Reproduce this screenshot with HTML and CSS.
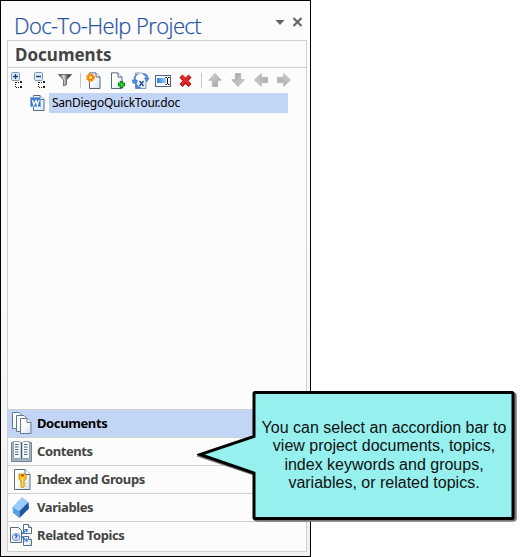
FILE: index.html
```html
<!DOCTYPE html>
<html lang="en">
<head>
<meta charset="utf-8">
<title>Doc-To-Help Project</title>
<link rel="stylesheet" href="styles.css">
</head>
<body>
<svg class="defs" width="0" height="0" aria-hidden="true">
  <defs>
    <linearGradient id="page" x2="1" y2="1"><stop offset=".4" stop-color="#fff"/><stop offset="1" stop-color="#d3e2f0"/></linearGradient>
    <linearGradient id="grey" x2="1" y2="1"><stop stop-color="#d2d2d2"/><stop offset="1" stop-color="#a5a5a5"/></linearGradient>
    <linearGradient id="blue" x2="1"><stop stop-color="#2f7de0"/><stop offset="1" stop-color="#9fd0ff"/></linearGradient>
    <linearGradient id="funnel" x2="1"><stop stop-color="#333"/><stop offset=".4" stop-color="#ddd"/><stop offset=".7" stop-color="#555"/><stop offset="1" stop-color="#222"/></linearGradient>
    <path id="arrow" d="M6.500.5l6 6.500h-3.500v6h-5v-6h-3.500z" fill="url(#grey)" stroke="#b0b0b0" stroke-width=".8"/>
  </defs>
</svg>
<main class="window">
  <header class="titlebar">
    <h1 class="title">Doc-To-Help Project</h1>
    <svg class="controls" width="30" height="14" viewBox="0 0 30 14"><path d="M.5 4h9L5 9z" fill="#666"/><path d="M18.500 2l8 8m0-8l-8 8" stroke="#666" stroke-width="2.200"/></svg>
  </header>
  <section class="panel">
    <h2 class="heading">Documents</h2>
    <div class="toolbar">
      <svg class="tool" width="14" height="18" viewBox="0 0 14 18"><rect x=".5" y=".5" width="8" height="8" rx="1" fill="#dceafa" stroke="#7f98b4"/><path d="M2 4.500h5M4.500 2v5" stroke="#173d78" stroke-width="1.300"/><path d="M4.500 10v6M5 10.500h4M5 15.500h4" stroke="#222" stroke-dasharray="1 1"/><path d="M9 9h2v2H9zM9 14h2v2H9z" fill="#222"/></svg>
      <svg class="tool" width="14" height="18" viewBox="0 0 14 18"><rect x=".5" y=".5" width="8" height="8" rx="1" fill="#dceafa" stroke="#7f98b4"/><path d="M2 4.500h5" stroke="#173d78" stroke-width="1.300"/><path d="M4.500 10v6M5 10.500h4M5 15.500h4" stroke="#222" stroke-dasharray="1 1"/><path d="M9 9h2v2H9zM9 14h2v2H9z" fill="#222"/></svg>
      <svg class="tool" width="15" height="18" viewBox="0 0 15 18"><path d="M.5 2.500h13l-5 5.500v4.500l-3 1.500V8z" fill="url(#funnel)" stroke="#555" stroke-width=".8"/></svg>
      <i class="divider"></i>
      <svg class="tool" width="16" height="18" viewBox="0 0 16 18"><path d="M3.500.9h6.500l4 4v11.600H3.500z" fill="url(#page)" stroke="#526a82"/><path d="M10 1v4h4" fill="#fff" stroke="#526a82"/><circle cx="4.500" cy="5.500" r="3.300" fill="#ffe62e" stroke="#f58a22" stroke-width="2.200" stroke-dasharray="2 .6"/><circle cx="4.500" cy="5.500" r="2.300" fill="#ffe62e" stroke="#ee5522"/></svg>
      <svg class="tool" width="16" height="18" viewBox="0 0 16 18"><path d="M1.500.9H8l4 4v11.600H1.500z" fill="url(#page)" stroke="#526a82"/><path d="M8 1v4h4" fill="#fff" stroke="#526a82"/><path d="M11.500 9v7M8 12.500h7" stroke="#087c13" stroke-width="3.500"/><path d="M11.500 10v5M9 12.500h5" stroke="#24df36" stroke-width="1.500"/></svg>
      <svg class="tool" width="18" height="18" viewBox="0 0 18 18"><path d="M3.500 1H10l4 4v11.500H3.500z" fill="url(#page)" stroke="#8a9cb0"/><path d="M7.500 9l4 5m0-5l-4 5" stroke="#234d94" stroke-width="1.400"/><path d="M6 2C3 3 2 6 2.500 8M11 2c3 0 4.500 2 4.500 5M4 14.500c2 1.500 4 1.500 5 1" fill="none" stroke="#5b93d8" stroke-width="1.800"/><path d="M0 8h5.500l-1 4-3.500-1zM12.500 6h4.500l-2 4zM4 12l3.500 3-3.500 1.500z" fill="#4d8ddd" stroke="#3a6fb8" stroke-width=".5"/></svg>
      <svg class="tool" width="17" height="18" viewBox="0 0 17 18"><rect x=".5" y="3.500" width="15" height="11" fill="#fff" stroke="#4b6887"/><path d="M2 6h9v5H2z" fill="url(#blue)"/><path d="M10.500 5.500h1.500M13 5.500h1.500M10.500 12.500h1.500M13 12.500h1.500M12.500 6v6" stroke="#111"/></svg>
      <svg class="tool" width="14" height="18" viewBox="0 0 14 18"><path d="M2 4l9 9.500M11 4l-9 9.500" stroke="#ac0909" stroke-width="4.200"/><path d="M2.500 4l8 8.500M10.500 4l-8 8.500" stroke="#e52b2b" stroke-width="2.600"/></svg>
      <i class="divider"></i>
      <svg class="arrow" width="14" height="14" viewBox="0 0 13 13.500"><use href="#arrow"/></svg>
      <svg class="arrow" width="14" height="14" viewBox="0 0 13 13.500"><use href="#arrow" transform="rotate(180 6.500 6.750)"/></svg>
      <svg class="arrow" width="14" height="14" viewBox="0 0 13.500 13"><use href="#arrow" transform="translate(0 13) rotate(-90)"/></svg>
      <svg class="arrow" width="14" height="14" viewBox="0 0 13.500 13"><use href="#arrow" transform="translate(13.500 0) rotate(90)"/></svg>
    </div>
    <div class="file">
      <svg width="16" height="16" viewBox="0 0 16 16"><path d="M3.500.5H10l4 4v11H3.500z" fill="url(#page)" stroke="#526a82"/><path d="M10 .5v4h4" fill="#fff" stroke="#526a82"/><rect x=".5" y="2.500" width="10" height="9" fill="#3d79cb" stroke="#83aee5"/><path d="M2.500 5l1.300 5L6 5.500 7.300 10 9 5" fill="none" stroke="#fff" stroke-width="1.300"/></svg>
      <span class="filename">SanDiegoQuickTour.doc</span>
    </div>
    <nav class="accordion">
      <div class="bar active">
        <svg width="26" height="26" viewBox="0 0 26 26"><g fill="url(#page)" stroke="#62798f"><path d="M2.500 1.500H9l3 3v13H2.500z"/><path d="M6.500 4.500H14l3 3v13H6.500z"/><path d="M10.500 7.500H17l4 4v11H10.500z"/><path d="M17 7.500v4h4" fill="#fff"/></g></svg>
        <span class="label">Documents</span></div>
      <div class="bar">
        <svg width="26" height="26" viewBox="0 0 26 26"><path d="M1.500 3.500h20v19h-20z" fill="#a3b2be" stroke="#718698"/><path d="M3.500 2.500h6l2 1.500 2-1.500h6v17h-6l-2 1.500-2-1.500h-6z" fill="#f5f9fc" stroke="#8fa1b0"/><path d="M11.500 4v16" stroke="#415969" stroke-width="1.500"/><path d="M5 5.500h4M5 8h4M5 10.500h4M5 13h4M5 15.500h4M14 5.500h4M14 8h4M14 10.500h4M14 13h4M14 15.500h4" stroke="#4c6684" stroke-dasharray="3 .5"/></svg>
        <span class="label">Contents</span></div>
      <div class="bar">
        <svg width="26" height="26" viewBox="0 0 26 26"><path d="M4.500 2.500H15l5 5v15H4.500z" fill="url(#page)" stroke="#587086"/><path d="M15 2.500v5h5" fill="#fff" stroke="#587086"/><path d="M9 7h6l1 1v4l-2 2v1.500l1 1-1 1 1 1-1 1-1.500 1.500-1.500-1.500V14l-2-2z" fill="#ffc51c" stroke="#d98a00"/><path d="M11 8.500h3" stroke="#855000" stroke-width="1.500"/><path d="M12.500 11v8" stroke="#fff09a"/></svg>
        <span class="label">Index and Groups</span></div>
      <div class="bar">
        <svg width="26" height="26" viewBox="0 0 26 26"><path d="M2.500 12L12 2l6.500 5-9 9z" fill="#9bcaff"/><path d="M2.500 12l7 4v7l-6.500-5z" fill="#5b9fe2"/><path d="M9.500 16l9-9 .5 6.500L9.500 23z" fill="#1b55a4"/></svg>
        <span class="label">Variables</span></div>
      <div class="bar last">
        <svg width="26" height="26" viewBox="0 0 26 26"><g fill="url(#page)" stroke="#587086"><path d="M.5 4.500h8l3 3v12H.5z"/><path d="M13.500 1.500h5l3 3v6h-8zM13.500 13.500h5l3 3v6h-8z"/><path d="M18.500 1.500v3h3M18.500 13.500v3h3" fill="#fff"/></g><ellipse cx="6" cy="14" rx="3.800" ry="3.500" fill="#e4edff" stroke="#6487ca"/><path d="M4.700 13q1.300-1.800 2.500-.5 0 1-1.200 1.500v1.800" fill="none" stroke="#204bb8" stroke-width="1.100"/><path d="M12 11l3-3M12 13.500l3 3" stroke="#2870cf" stroke-width="1.500"/><path d="M14 6h4l-1 4zM17 14.500l1 4h-4z" fill="#3b7cdd"/></svg>
        <span class="label">Related Topics</span></div>
    </nav>
  </section>
</main>
<aside class="callout">
  <svg class="bubble" width="322" height="136" viewBox="0 0 322 136"><path d="M59 4h256q2 0 2 2v122q0 2-2 2H59q-2 0-2-2V84L3 66l54-18V6q0-2 2-2z" fill="none" stroke="#777" stroke-width="3.500" transform="translate(1 1)"/><path d="M58 3.500h257q1 0 1 1v124q0 1-1 1H58q-1 0-1-1V84L3 65.500 57 47.500V4.500q0-1 1-1z" fill="#96f0ed" stroke="#000" stroke-width="3"/></svg>
  <p class="message">You can select an accordion bar to<br>view project documents, topics,<br>index keywords and groups,<br>variables, or related topics.</p>
</aside>
</body>
</html>
```

FILE: styles.css
```css
* { box-sizing: border-box; }
body { margin: 0; background: #fff; width: 525px; height: 557px; overflow: hidden; position: relative; }
.defs { position: absolute; }
svg { display: block; flex: none; }
.window { width: 311px; height: 557px; border: 1px solid #000; padding: 0 3px 4px 6px; display: flex; flex-direction: column; background: linear-gradient(#fcfcfc 0 40%, #f0f0f0); }
.titlebar { height: 39px; display: flex; justify-content: space-between; padding: 7px 2px 0 7px; }
.title { margin: 0; font: 300 22px/34px "Open Sans", sans-serif; color: #2855a0; letter-spacing: -.6px; white-space: nowrap; -webkit-text-stroke: .25px #2855a0; }
.controls { margin-top: 8px; }
.panel { flex: 1; display: flex; flex-direction: column; border: 1px solid #d0d0d0; background: #fcfcfc; min-height: 0; }
.heading { margin: 0; height: 27px; border-bottom: 1px solid #d0d0d0; padding-left: 7px; font: bold 17px/28px "Noto Sans", sans-serif; color: #444; }
.toolbar { height: 25px; display: grid; grid-template-columns: 23px 24px 22px 6px 24px 22px 23px 24px 22px 7px 23px 23px 23px 22px; align-items: center; padding-left: 3px; }
.arrow { margin-top: -2px; }
.divider { width: 1px; height: 15px; background: #c6c6c6; }
.file { display: flex; align-items: center; height: 20px; padding-left: 22px; gap: 3px; }
.filename { width: 239px; height: 20px; background: #c2d5f5; padding-left: 3px; font: 12px/20px "Noto Sans", sans-serif; letter-spacing: -.25px; color: #000; white-space: nowrap; }
.accordion { margin-top: auto; border-top: 1px solid #d0d0d0; }
.bar { height: 28px; border-bottom: 1px solid #d0d0d0; display: flex; align-items: center; gap: 1px; padding-left: 2px; font: bold 13px/27px "Noto Sans", sans-serif; letter-spacing: -.4px; color: #444; white-space: nowrap; }
.active { background: #c2d5f5; color: #000; }
.last { height: 29px; border: 0; padding-bottom: 2px; }
.callout { position: absolute; left: 197px; top: 389px; width: 322px; height: 136px; }
.bubble { position: absolute; inset: 0; }
.message { position: relative; margin: 0; padding: 30px 7px 0 59px; font: 16px/18.300px "Liberation Sans", sans-serif; color: #111; text-align: center; white-space: nowrap; }
```
